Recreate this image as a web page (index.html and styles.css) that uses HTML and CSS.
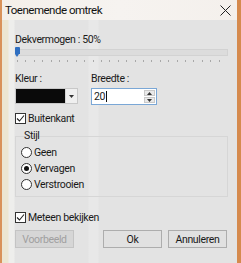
FILE: index.html
```html
<!DOCTYPE html>
<html>
<head>
<meta charset="utf-8">
<link rel="stylesheet" href="styles.css">
</head>
<body>
<div class="window">
  <div class="titlebar">
    <span class="title">Toenemende omtrek</span>
    <svg class="close" width="11" height="11" viewBox="0 0 11 11"><path d="M0.5 0.5L10.5 10.5M10.5 0.5L0.5 10.5" stroke="#222" stroke-width="1" fill="none"/></svg>
  </div>
  <div class="content">
    <div class="label">Dekvermogen : 50%</div>
    <div class="slider">
      <div class="track"></div>
      <div class="thumb"></div>
    </div>
    <div class="ticks"></div>
    <div class="fields">
      <div class="field">
        <div class="label">Kleur :</div>
        <div class="colorbox">
          <div class="swatch"></div>
          <div class="drop"><svg width="5" height="3" viewBox="0 0 5 3"><path d="M0 0H5L2.5 3Z" fill="#333"/></svg></div>
        </div>
      </div>
      <div class="field">
        <div class="label">Breedte :</div>
        <div class="spin">
          <span class="value">20</span><span class="caret"></span>
          <div class="arrows">
            <div class="arrow"><svg width="5" height="3" viewBox="0 0 5 3"><path d="M0 3H5L2.5 0Z" fill="#333"/></svg></div>
            <div class="arrow"><svg width="5" height="3" viewBox="0 0 5 3"><path d="M0 0H5L2.5 3Z" fill="#333"/></svg></div>
          </div>
        </div>
      </div>
    </div>
    <div class="check buiten"><span class="box"><svg width="9" height="9" viewBox="0 0 9 9"><path d="M1 4.5L3.5 7L8 1.5" stroke="#222" stroke-width="1.1" fill="none"/></svg></span>Buitenkant</div>
    <div class="group">
      <div class="legend">Stijl</div>
      <div class="radio"><span class="circle"></span>Geen</div>
      <div class="radio"><span class="circle on"></span>Vervagen</div>
      <div class="radio"><span class="circle"></span>Verstrooien</div>
    </div>
    <div class="check meteen"><span class="box"><svg width="9" height="9" viewBox="0 0 9 9"><path d="M1 4.5L3.5 7L8 1.5" stroke="#222" stroke-width="1.1" fill="none"/></svg></span>Meteen bekijken</div>
    <div class="buttons">
      <div class="btn disabled">Voorbeeld</div>
      <div class="spacer"></div>
      <div class="btn">Ok</div>
      <div class="btn">Annuleren</div>
    </div>
  </div>
</div>
</body>
</html>
```

FILE: styles.css
```css
html, body {
  margin: 0;
  padding: 0;
}
body {
  width: 241px;
  height: 263px;
  overflow: hidden;
  font-family: Roboto, "Noto Sans", sans-serif;
  font-size: 10.5px;
  letter-spacing: -0.35px;
  color: #1a1a1a;
}
.window {
  width: 241px;
  height: 263px;
  box-sizing: border-box;
  border-left: 2px solid #d9925a;
  border-right: 4px solid #d58a4e;
  background: linear-gradient(90deg, #ece6d2 0px, #ece6d2 6px, #eeeeec 7px, #eeeeec 12px, #e3e3e3 13px, #e3e3e3 86px, #e8e8e8 87px, #e8e8e8 96px, #e3e3e3 97px, #e3e3e3 100%);
  display: flex;
  flex-direction: column;
}
.titlebar {
  height: 20px;
  flex: none;
  display: flex;
  align-items: center;
  justify-content: space-between;
  padding: 0 6px 0 3px;
  background: linear-gradient(90deg, #f4efe9, #f6f3f0 50%, #f4f0ec);
}
.title {
  font-size: 11.5px;
  color: #111;
  letter-spacing: -0.5px;
}
.close {
  display: block;
}
.content {
  flex: 1;
  padding: 13px 9px 0 13px;
  display: flex;
  flex-direction: column;
}
.label {
  line-height: 14px;
  height: 14px;
}
.slider {
  position: relative;
  height: 10px;
}
.track {
  height: 5px;
  margin-top: 2px;
  background: #dcdcdc;
  border: 1px solid #d2d2d2;
}
.thumb {
  position: absolute;
  left: 0;
  top: 0;
  width: 5px;
  height: 7px;
  background: #2f6fc1;
  border-radius: 1px 1px 0 0;
}
.thumb::after {
  content: "";
  position: absolute;
  left: 0;
  top: 7px;
  border-left: 2.5px solid transparent;
  border-right: 2.5px solid transparent;
  border-top: 3px solid #2f6fc1;
}
.ticks {
  height: 2px;
  margin-top: 3px;
  margin-left: 2px;
  margin-right: 2px;
  background: repeating-linear-gradient(90deg, #a8a8a8 0px, #a8a8a8 1px, transparent 1px, transparent 8.4px);
}
.fields {
  display: flex;
  gap: 13px;
  margin-top: 10px;
}
.field .label {
  margin-bottom: 2px;
}
.colorbox {
  width: 63px;
  height: 16px;
  box-sizing: border-box;
  display: flex;
  border: 1px solid #c8c8c8;
  background: #f4f4f4;
}
.swatch {
  width: 49px;
  background: #0a0a0a;
}
.drop {
  flex: 1;
  display: flex;
  align-items: center;
  justify-content: center;
  background: #efefef;
  border-left: 1px solid #d5d5d5;
}
.drop svg, .arrow svg {
  display: block;
}
.spin {
  width: 66px;
  height: 17px;
  box-sizing: border-box;
  border: 1px solid #7aa7d6;
  background: #fff;
  display: flex;
  align-items: center;
  padding-left: 2px;
  position: relative;
}
.caret {
  width: 1px;
  height: 11px;
  background: #111;
  margin-left: 1px;
}
.arrows {
  position: absolute;
  right: 1px;
  top: 1px;
  bottom: 1px;
  width: 11px;
  display: flex;
  flex-direction: column;
  gap: 1px;
}
.arrow {
  flex: 1;
  background: #e9e9e9;
  border: 1px solid #c9c9c9;
  display: flex;
  align-items: center;
  justify-content: center;
}
.check {
  display: flex;
  align-items: center;
  height: 14px;
}
.buiten {
  margin-top: 6px;
}
.box {
  width: 9px;
  height: 9px;
  border: 1px solid #333;
  background: #fff;
  margin-right: 2px;
  flex: none;
  display: flex;
}
.group {
  position: relative;
  margin-top: 11px;
  height: 61px;
  box-sizing: border-box;
  border: 1px solid #d6d6d6;
  padding: 7px 0 0 5px;
}
.legend {
  position: absolute;
  top: -8px;
  left: 7px;
  line-height: 14px;
  padding: 0 1px;
}
.radio {
  display: flex;
  align-items: center;
  height: 16px;
}
.circle {
  width: 9px;
  height: 9px;
  border: 1px solid #333;
  border-radius: 50%;
  background: #fff;
  margin-right: 2px;
  box-sizing: content-box;
  position: relative;
}
.circle.on::after {
  content: "";
  position: absolute;
  left: 2px;
  top: 2px;
  width: 5px;
  height: 5px;
  border-radius: 50%;
  background: #111;
}
.meteen {
  margin-top: 13px;
}
.buttons {
  display: flex;
  margin-top: 6px;
  gap: 6px;
  margin-right: 1px;
}
.spacer {
  flex: 1;
}
.btn {
  width: 59px;
  height: 18px;
  box-sizing: border-box;
  border: 1px solid #adadad;
  background: #e1e1e1;
  display: flex;
  align-items: center;
  justify-content: center;
}
.btn.disabled {
  color: #a0a0a0;
  border-color: #c4c4c4;
  background: #d6d6d6;
}
```
